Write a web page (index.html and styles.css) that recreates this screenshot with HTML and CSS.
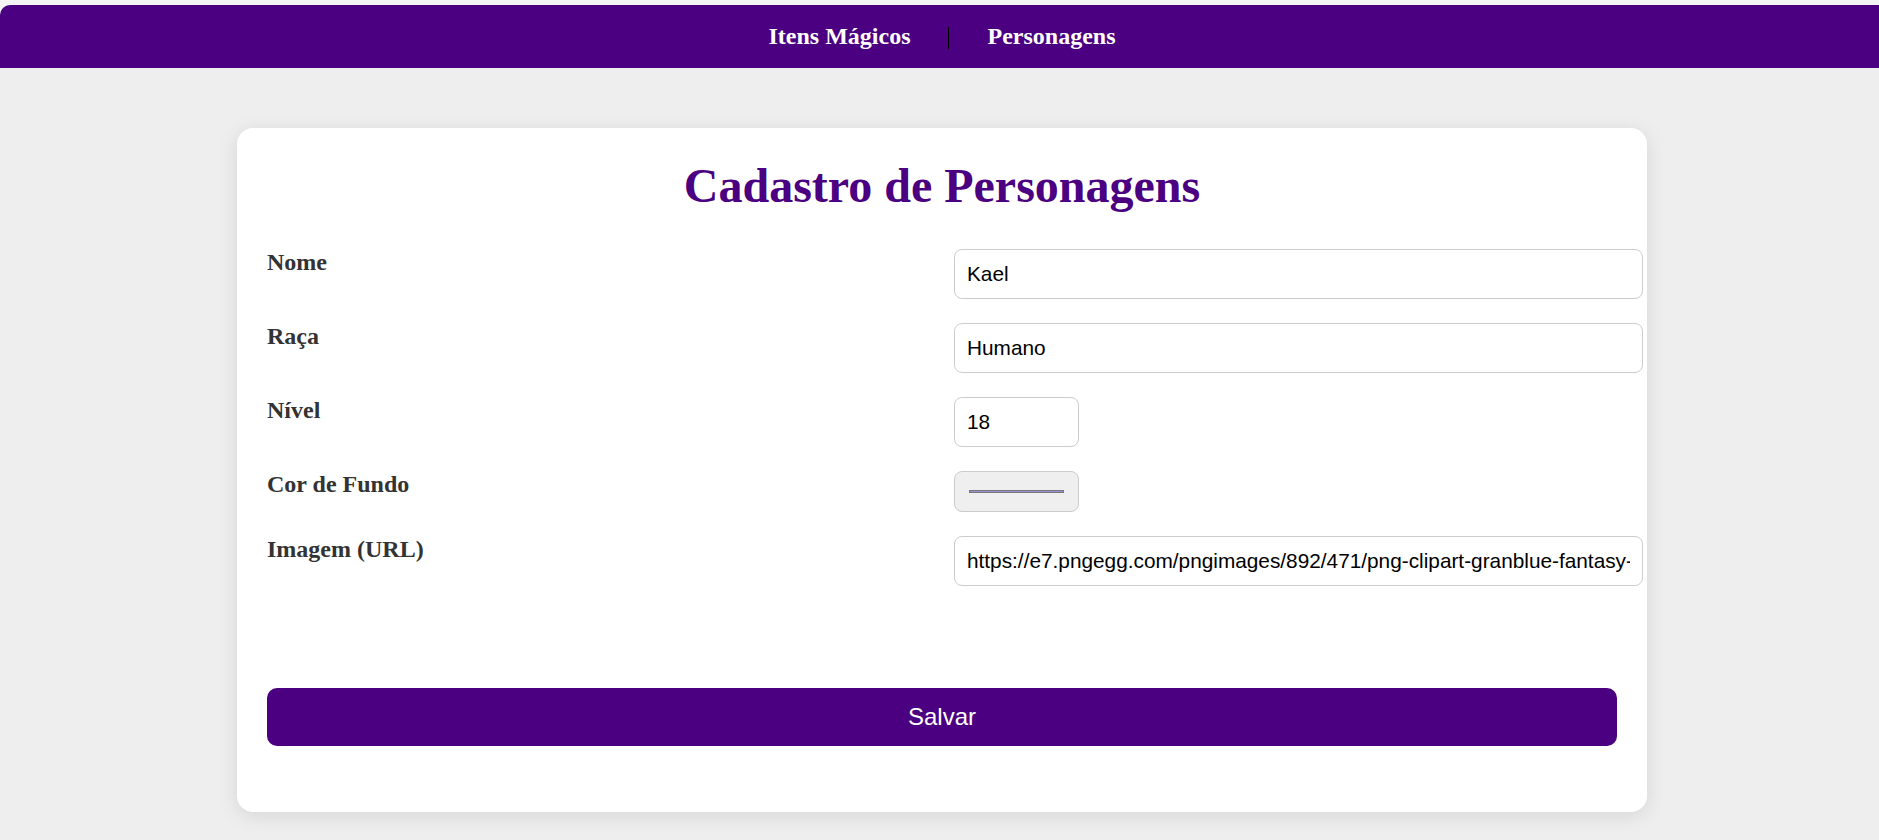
FILE: index.html
```html
<!DOCTYPE html>
<html lang="pt-BR">
<head>
<meta charset="utf-8">
<title>Cadastro de Personagens</title>
<link rel="stylesheet" href="styles.css">
</head>
<body>
<div class="topbar">
  <nav class="nav">
    <a class="nav-link" href="#">Itens Mágicos</a>
    <span class="nav-sep"></span>
    <a class="nav-link" href="#">Personagens</a>
  </nav>
</div>
<main class="page">
  <section class="card">
    <h1 class="title">Cadastro de Personagens</h1>
    <form class="form">
      <div class="fields">
        <label class="field-label" for="nome">Nome</label>
        <input class="field-input" id="nome" type="text" value="Kael">

        <label class="field-label" for="raca">Raça</label>
        <input class="field-input" id="raca" type="text" value="Humano">

        <label class="field-label" for="nivel">Nível</label>
        <input class="field-input field-input--short" id="nivel" type="number" value="18">

        <label class="field-label" for="cor">Cor de Fundo</label>
        <input class="field-color" id="cor" type="color" value="#9a8fd8">

        <label class="field-label" for="imagem">Imagem (URL)</label>
        <input class="field-input" id="imagem" type="text" value="https://e7.pngegg.com/pngimages/892/471/png-clipart-granblue-fantasy-character-art.png">
      </div>
      <button class="btn-save" type="button">Salvar</button>
    </form>
  </section>
</main>
</body>
</html>
```

FILE: styles.css
```css
html {
  background: #eeeeee;
}

body {
  margin: 0;
  background: #eeeeee;
  font-family: "Liberation Serif", "Times New Roman", serif;
}

.topbar {
  background: #f4f4f4;
  padding-top: 5px;
}

.nav {
  background: #4b0082;
  height: 63px;
  border-top-left-radius: 10px;
  display: flex;
  justify-content: center;
  align-items: center;
  gap: 38px;
  padding-left: 5px;
}

.nav-link {
  color: #ffffff;
  font-weight: bold;
  font-size: 24px;
  text-decoration: none;
}

.nav-sep {
  width: 1px;
  height: 22px;
  background: #000000;
  margin-top: 3px;
}

.page {
  padding: 60px 0 20px 5px;
}

.card {
  width: 1350px;
  margin: 0 auto;
  background: #ffffff;
  border-radius: 16px;
  padding: 30px;
  box-shadow: 0 4px 20px rgba(0, 0, 0, 0.1);
}

.title {
  margin: 0 0 36px;
  text-align: center;
  color: #4b0082;
  font-size: 48px;
  font-weight: bold;
  line-height: normal;
}

.form {
  margin: 0;
}

.fields {
  display: grid;
  grid-template-columns: 1fr 1fr;
  column-gap: 24px;
  row-gap: 24px;
  align-items: start;
}

.field-label {
  font-weight: bold;
  font-size: 24px;
  color: #333333;
  line-height: normal;
}

.field-input {
  font-family: "Liberation Sans", Arial, sans-serif;
  font-size: 20.8px;
  padding: 12px;
  border: 1px solid #cccccc;
  border-radius: 8px;
  width: 100%;
  box-sizing: content-box;
  justify-self: start;
  color: #000000;
  background: #ffffff;
  margin: 0;
  outline: none;
}

.field-input--short {
  width: 99px;
}

.field-color {
  width: 125px;
  height: 41px;
  box-sizing: border-box;
  padding: 12px;
  margin: 0;
  background: #efefef;
  border: 1px solid #cccccc;
  border-radius: 8px;
}

.field-color::-webkit-color-swatch-wrapper {
  padding: 6px 2px;
}

.field-color::-webkit-color-swatch {
  border: 1px solid #777777;
  border-radius: 0;
}

.btn-save {
  display: block;
  width: 100%;
  margin: 102px 0 36px;
  padding: 15px;
  font-family: "Liberation Sans", Arial, sans-serif;
  font-size: 24px;
  line-height: normal;
  color: #ffffff;
  background: #4b0082;
  border: none;
  border-radius: 10px;
}
```
